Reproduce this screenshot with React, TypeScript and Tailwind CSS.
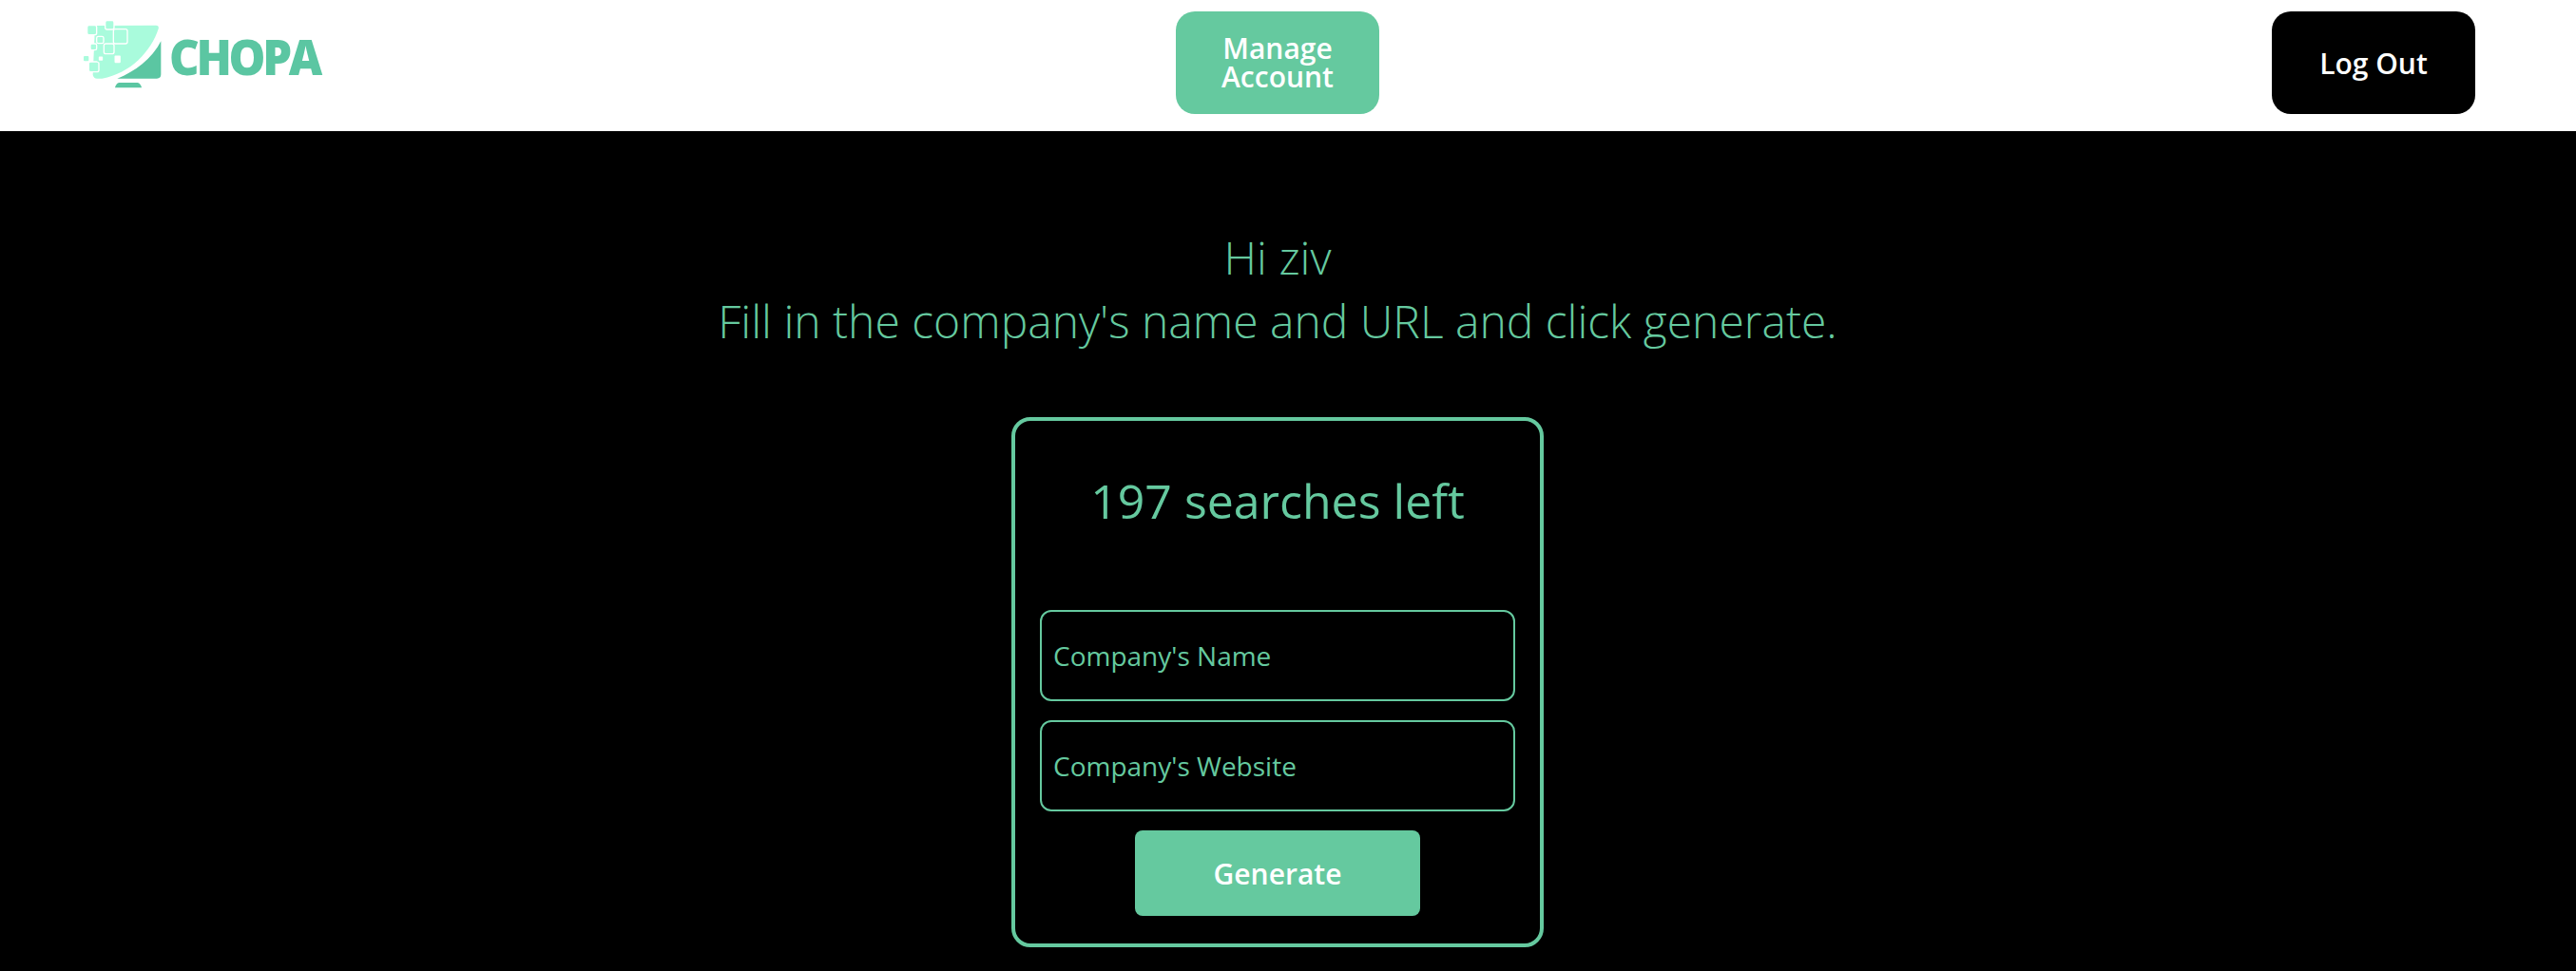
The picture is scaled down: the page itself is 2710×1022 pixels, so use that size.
const Logo = () => (
  <div className="flex items-start mb-[23px]">
    <svg width="100" height="85" viewBox="0 0 300 255" className="shrink-0" aria-hidden="true">
      <path d="M60 36 L252 35 Q263 35 260 46 C238 115 172 188 82 203 L66 203 Q56 203 53 192 Z" fill="#a9fbdc" />
      <path d="M268 85 L268 190 Q268 203 255 203 L130 203 C185 182 240 140 268 85 Z" fill="#5bc6a2" />
      <path d="M136 216 L194 216 Q204 218 207 232 L123 232 Q126 218 136 216 Z" fill="#5bc6a2" />
      <g fill="#a9fbdc" stroke="#ffffff" strokeWidth="4">
        <rect x="35" y="35" width="30" height="30" rx="6" />
        <rect x="92" y="20" width="28" height="28" rx="6" />
        <rect x="118" y="47" width="44" height="46" rx="6" />
        <rect x="65" y="70" width="22" height="22" rx="5" />
        <rect x="45" y="93" width="20" height="20" rx="5" />
        <rect x="88" y="93" width="32" height="32" rx="6" />
        <rect x="22" y="130" width="20" height="20" rx="5" />
        <rect x="40" y="150" width="32" height="32" rx="6" />
      </g>
      <g fill="#ffffff" stroke="#a9fbdc" strokeWidth="5">
        <rect x="69" y="131" width="18" height="18" rx="5" />
        <rect x="119" y="128" width="24" height="28" rx="5" />
      </g>
    </svg>
    <span className="font-['Open_Sans',sans-serif] font-extrabold text-[52px] leading-none tracking-[-3.5px] text-[#5bc6a2] -ml-[2px] mt-[18px] origin-left scale-x-[0.94]">
      CHOPA
    </span>
  </div>
);

const Field = ({ label }: { label: string }) => (
  <input
    placeholder={label}
    className="w-[500px] h-[96px] bg-black border-2 border-[#65c99f] rounded-[12px] px-[12px] text-[28px] text-[#65c99f] placeholder:text-[#65c99f] outline-none"
  />
);

export default function App() {
  return (
    <div className="min-h-[1022px] bg-black font-['Open_Sans',sans-serif]">
      <header className="h-[138px] bg-white flex items-center justify-between pl-[80px] pr-[106px]">
        <div className="w-[218px]">
          <Logo />
        </div>
        <button className="w-[214px] h-[108px] rounded-[20px] bg-[#65c99f] text-white text-[30px] leading-[30px] font-semibold -mt-[6px]">
          Manage
          <br />
          Account
        </button>
        <button className="w-[214px] h-[108px] rounded-[20px] bg-black text-white text-[30px] font-semibold -mt-[6px]">
          Log Out
        </button>
      </header>
      <main className="flex flex-col items-center pr-[22px] pt-[99px]">
        <p className="text-[48px] leading-[67px] font-light text-[#65c99f] text-center">
          Hi ziv
          <br />
          Fill in the company's name and URL and click generate.
        </p>
        <section className="mt-[68px] w-[560px] h-[558px] border-4 border-[#65c99f] rounded-[20px] flex flex-col items-center pt-[50px]">
          <h2 className="text-[50px] leading-[68px] text-[#65c99f]">197 searches left</h2>
          <div className="mt-[81px] flex flex-col gap-[20px]">
            <Field label="Company's Name" />
            <Field label="Company's Website" />
          </div>
          <button className="mt-[20px] w-[300px] h-[90px] rounded-[8px] bg-[#65c99f] text-white text-[30px] font-semibold">
            Generate
          </button>
        </section>
      </main>
    </div>
  );
}
